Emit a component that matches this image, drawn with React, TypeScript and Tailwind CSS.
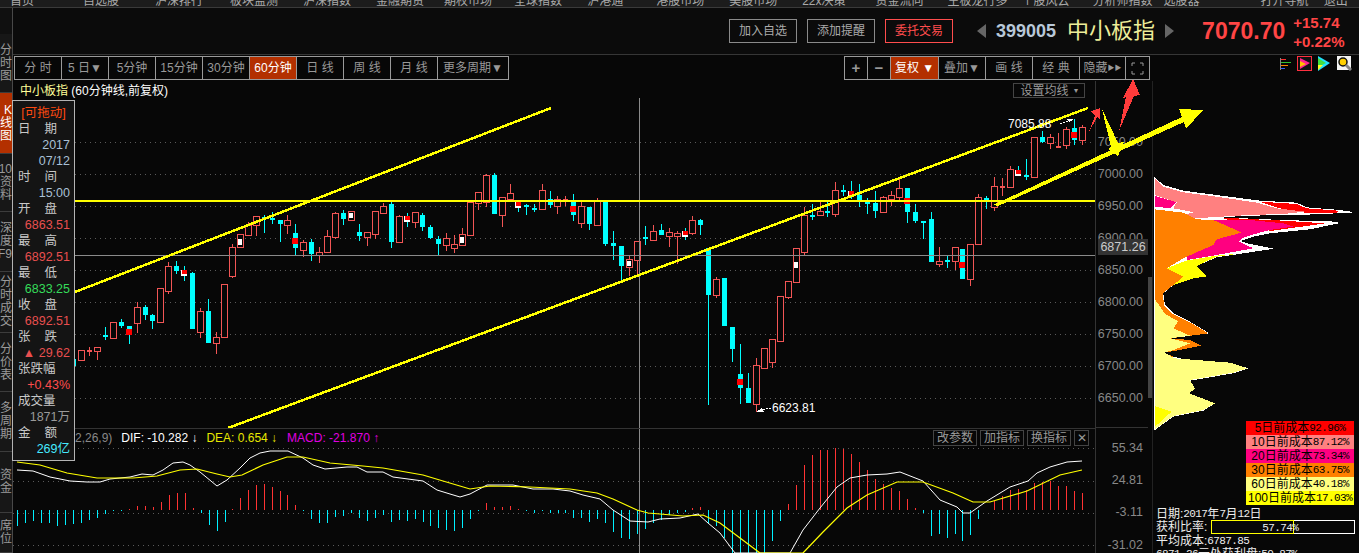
import React from "react";

type Candle = [number, number, number, number, number, "r" | "c" | "m", number?, number?];

const RED = "#f25555";
const CYAN = "#00ffff";

// x, wick top, body top, body bottom, wick bottom, kind, inner y1, inner y2
const candles: Candle[] = [
  [73, 359, 359, 366, 366, "c"], [81, 350, 350, 360, 360, "r"], [89, 347, 350, 350, 356, "r"], [97, 347, 347, 351, 360, "r"],
  [105, 327, 335, 335, 340, "c"], [113, 322, 322, 338, 338, "r"], [121, 319, 322, 326, 328, "c"], [129, 326, 326, 335, 344, "c", 329, 335],
  [137, 302, 307, 323, 333, "r"], [145, 305, 307, 315, 320, "c"], [152, 314, 315, 321, 329, "c"], [160, 288, 288, 322, 322, "r"],
  [168, 262, 266, 291, 294, "r"], [176, 261, 266, 271, 274, "c"], [184, 266, 270, 276, 281, "m"], [192, 272, 273, 329, 329, "c"],
  [200, 308, 311, 332, 338, "r"], [208, 299, 311, 343, 343, "c"], [216, 332, 337, 343, 354, "r"], [224, 284, 284, 337, 338, "r"],
  [232, 244, 247, 276, 278, "r"], [240, 234, 234, 247, 247, "r", 239, 245], [248, 222, 225, 235, 236, "r"], [256, 216, 216, 225, 236, "r"],
  [264, 215, 217, 217, 233, "c"], [272, 212, 218, 220, 224, "c"], [280, 220, 220, 224, 242, "c"], [287, 215, 220, 225, 234, "r"],
  [295, 224, 233, 248, 255, "c", 238, 244], [303, 240, 242, 250, 257, "r"], [311, 239, 242, 254, 261, "c"], [319, 247, 252, 255, 263, "r"],
  [327, 230, 236, 252, 252, "r"], [335, 212, 213, 237, 239, "r"], [343, 210, 213, 219, 225, "c"], [351, 211, 211, 220, 221, "r", 213, 218],
  [359, 224, 232, 236, 241, "c"], [367, 232, 232, 237, 246, "r"], [375, 211, 211, 234, 239, "r"], [383, 203, 206, 213, 214, "r"],
  [391, 202, 204, 242, 248, "c"], [399, 215, 216, 242, 242, "r"], [407, 213, 216, 222, 227, "m"], [415, 212, 212, 222, 228, "r"],
  [422, 213, 215, 227, 231, "c"], [430, 225, 227, 238, 239, "c"], [438, 236, 239, 244, 255, "c"], [446, 233, 238, 245, 251, "r"],
  [454, 235, 244, 248, 253, "r"], [462, 228, 234, 245, 245, "r", 237, 243], [470, 202, 202, 235, 235, "r"], [478, 192, 192, 203, 210, "r"],
  [486, 174, 175, 202, 207, "r"], [494, 173, 175, 214, 214, "c"], [502, 197, 197, 215, 227, "r"], [510, 184, 193, 199, 199, "r"],
  [518, 202, 202, 208, 212, "m"], [526, 204, 205, 207, 215, "c"], [534, 204, 208, 208, 212, "c"], [542, 184, 190, 209, 209, "r"],
  [550, 191, 199, 205, 208, "c"], [557, 196, 199, 206, 214, "r"], [565, 196, 199, 199, 206, "r"], [573, 194, 202, 215, 221, "c", 206, 212],
  [581, 202, 206, 223, 228, "r"], [589, 207, 207, 224, 230, "c"], [597, 198, 200, 225, 226, "r"], [605, 201, 201, 244, 246, "c"],
  [613, 231, 243, 246, 260, "c"], [621, 246, 246, 266, 281, "c"], [629, 256, 259, 267, 276, "r", 261, 266], [637, 241, 241, 260, 275, "r"],
  [645, 226, 237, 239, 245, "c"], [653, 225, 231, 240, 240, "r"], [661, 224, 230, 235, 235, "c"], [669, 228, 232, 236, 247, "r"],
  [677, 231, 233, 236, 264, "r"], [685, 228, 231, 237, 240, "m"], [692, 216, 220, 233, 235, "r"], [700, 219, 220, 225, 235, "c"],
  [708, 248, 248, 295, 405, "c"], [716, 277, 279, 295, 298, "r"], [724, 278, 278, 326, 326, "c"], [732, 327, 327, 349, 362, "c"],
  [740, 344, 374, 388, 404, "c", 379, 385], [748, 373, 388, 403, 403, "c"], [756, 358, 365, 404, 412, "r"], [764, 348, 348, 368, 368, "r"],
  [772, 339, 339, 362, 368, "r"], [780, 296, 296, 341, 341, "r"], [788, 281, 281, 297, 299, "r"], [796, 248, 248, 282, 282, "r", 262, 268],
  [804, 207, 215, 252, 256, "r"], [812, 204, 215, 215, 220, "c"], [820, 202, 211, 215, 215, "r"], [827, 202, 211, 213, 217, "c"],
  [835, 182, 190, 214, 217, "r"], [843, 185, 190, 190, 196, "c"], [851, 181, 191, 197, 199, "m"], [859, 184, 195, 200, 207, "c"],
  [867, 198, 202, 204, 214, "c"], [875, 191, 203, 211, 218, "c"], [883, 196, 197, 212, 212, "r"], [891, 191, 195, 199, 206, "r"],
  [899, 179, 188, 197, 201, "r"], [907, 188, 188, 212, 223, "c", 198, 204], [915, 204, 212, 221, 223, "c"], [923, 221, 221, 223, 239, "c"],
  [931, 212, 219, 262, 262, "c"], [939, 247, 261, 264, 267, "r"], [947, 256, 260, 260, 268, "c"], [955, 247, 247, 261, 270, "r"],
  [962, 249, 249, 279, 279, "c", 262, 268], [970, 244, 244, 279, 286, "r"], [978, 194, 197, 244, 244, "r"], [986, 196, 198, 198, 209, "c"],
  [994, 177, 186, 207, 211, "r"], [1002, 178, 186, 186, 196, "r"], [1010, 166, 169, 187, 187, "r"], [1018, 166, 170, 176, 176, "m"],
  [1026, 159, 175, 175, 180, "c"], [1034, 137, 137, 177, 177, "r"], [1042, 131, 137, 142, 143, "c"], [1050, 134, 137, 143, 149, "r"],
  [1058, 133, 146, 146, 147, "r"], [1066, 127, 129, 145, 149, "r"], [1074, 119, 128, 140, 145, "c", 132, 138], [1082, 125, 127, 140, 145, "r"],
];

// x, end of bar measured from the zero line
const bars: [number, number][] = [
  [17, 526], [25, 523], [33, 521], [41, 523], [49, 523], [57, 526], [65, 525], [73, 524], [81, 523], [89, 520], [97, 518], [105, 514], [113, 511],
  [121, 511], [129, 509], [137, 506], [145, 506], [153, 507], [161, 502], [169, 495], [177, 493], [185, 493], [193, 508], [201, 513], [209, 525],
  [217, 531], [225, 522], [232, 509], [240, 498], [248, 490], [256, 485], [264, 484], [272, 487], [280, 491], [287, 495], [295, 505], [303, 511],
  [311, 519], [319, 523], [327, 523], [335, 517], [343, 516], [351, 513], [359, 518], [367, 521], [375, 518], [383, 515], [391, 522], [399, 520],
  [407, 521], [415, 519], [423, 522], [430, 526], [438, 528], [446, 530], [454, 531], [462, 528], [470, 519], [478, 511], [486, 503], [494, 507],
  [502, 507], [510, 506], [518, 509], [526, 511], [534, 513], [542, 511], [550, 513], [558, 513], [565, 513], [573, 518], [581, 518], [589, 522],
  [597, 519], [605, 523], [613, 532], [621, 538], [629, 539], [637, 534], [645, 529], [653, 523], [661, 520], [669, 515], [677, 513], [685, 512],
  [692, 508], [700, 507], [708, 523], [716, 526], [724, 538], [732, 553], [740, 553], [748, 553], [756, 553], [764, 553], [772, 541], [780, 521],
  [788, 504], [796, 485], [804, 465], [812, 455], [820, 450], [827, 450], [835, 448], [843, 449], [851, 454], [859, 462], [867, 470], [875, 479],
  [883, 484], [891, 488], [899, 491], [907, 499], [915, 508], [923, 513], [931, 536], [939, 534], [947, 538], [955, 534], [962, 541], [970, 535],
  [978, 519], [994, 501], [1002, 496], [1010, 490], [1018, 489], [1026, 490], [1034, 483], [1042, 482], [1050, 481], [1058, 486], [1066, 486], [1074, 491], [1082, 493],
];

const dif = "17,470 33,471 50,477 70,481 87,482 100,482 110,479 130,477 142,474 153,475 163,470 173,463 183,462 190,465 200,472 217,486 227,480 240,468 250,458 260,453 270,451 288,451 303,458 313,465 325,469 347,467 357,467 367,472 383,472 393,477 423,481 437,490 450,494 460,497 470,494 487,485 513,485 533,489 553,489 570,491 583,495 600,499 613,510 630,521 648,522 660,519 680,518 698,514 708,523 720,533 735,553 790,553 803,530 820,508 837,487 850,478 867,475 887,474 900,472 923,481 940,500 957,507 963,513 970,513 987,501 1010,487 1028,481 1037,473 1050,467 1067,462 1082,461";
const dea = "17,462 40,465 67,473 97,478 133,478 157,476 180,470 197,469 217,474 230,477 242,475 263,465 287,457 303,457 330,463 363,466 383,468 423,475 443,481 470,489 490,486 530,487 570,489 597,493 613,499 637,510 648,513 660,514 683,516 703,515 720,523 740,538 760,553 803,553 823,532 847,508 867,495 897,482 923,482 953,493 973,502 990,502 1027,491 1060,475 1082,470";

const navItems: [string, string][] = [
  ["首页", "ml-[10px]"], ["自选股", "ml-[49px]"], ["沪深排行", "ml-[36px]"], ["板块监测", "ml-[27px]"], ["沪深指数", "ml-[25px]"], ["金融期货", "ml-[25px]"],
  ["期权市场", "ml-[20px]"], ["全球指数", "ml-[22px]"], ["沪港通", "ml-[25px]"], ["港股市场", "ml-[33px]"], ["美股市场", "ml-[25px]"], ["22x决策", "ml-[25px]"],
  ["资金流向", "ml-[30px]"], ["主板龙行多", "ml-[24px]"], ["个股风云", "ml-[14px]"], ["分析师指数", "ml-[23px]"], ["选股器", "ml-[11px]"], ["打开导航", "ml-[61px]"], ["退出", "ml-[15px]"],
];

const sideTabs: [string[], string, boolean][] = [
  [["分", "时", "图"], "h-[59px]", false],
  [["K", "线", "图"], "h-[61px]", true],
  [["F10", "资", "料"], "h-[58px]", false],
  [["深", "度", "F9"], "h-[60px]", false],
  [["分", "时", "成", "交"], "h-[61px]", false],
  [["分", "价", "表"], "h-[59px]", false],
  [["多", "周", "期"], "h-[60px]", false],
  [["资", "金"], "h-[61px]", false],
  [["席", "位"], "h-[40px]", false],
];

const periodTabs: [string, string, boolean?][] = [
  ["分 时", "w-[47px]"], ["5 日▼", "w-[47px]"], ["5分钟", "w-[47px]"], ["15分钟", "w-[47px]"], ["30分钟", "w-[47px]"], ["60分钟", "w-[47px]", true],
  ["日 线", "w-[47px]"], ["周 线", "w-[47px]"], ["月 线", "w-[47px]"], ["更多周期▼", "w-[70px]"],
];

const toolTabs: [React.ReactNode, string, boolean?][] = [
  [<span className="text-[15px] font-bold">+</span>, "w-[23px]"],
  [<span className="text-[15px] font-bold">−</span>, "w-[23px]"],
  ["复权 ▼", "w-[48px]", true],
  ["叠加▼", "w-[47px]"],
  ["画 线", "w-[47px]"],
  ["经 典", "w-[47px]"],
  [<>隐藏<span className="text-[7px]">▶▶</span></>, "w-[46px]"],
];

const infoRows: [string, string][] = [
  ["日|期", "label"], ["2017", "text-[#a9c0d6]"], ["07/12", "text-[#a9c0d6]"], ["时|间", "label"], ["15:00", "text-[#a9c0d6]"], ["开|盘", "label"],
  ["6863.51", "text-[#e84f4f]"], ["最|高", "label"], ["6892.51", "text-[#e84f4f]"], ["最|低", "label"], ["6833.25", "text-[#35dc5a]"], ["收|盘", "label"],
  ["6892.51", "text-[#e84f4f]"], ["张|跌", "label"], ["▲ 29.62", "text-[#e84f4f]"], ["张跌幅", "label"], ["+0.43%", "text-[#ff4d4d]"], ["成交量", "label"],
  ["1871万", "text-[#9a9a9a]"], ["金|额", "label"], ["269亿", "text-[#46eaff]"],
];

const legend: [string, string, string][] = [
  ["5日前成本", "92.96%", "bg-[#ff0000]"],
  ["10日前成本", "87.12%", "bg-[#ff8080]"],
  ["20日前成本", "73.34%", "bg-[#ff0080]"],
  ["30日前成本", "63.75%", "bg-[#ff8000]"],
  ["60日前成本", "40.18%", "bg-[#ffff80]"],
  ["100日前成本", "17.03%", "bg-[#ffff00]"],
];

function Num({ children }: { children: React.ReactNode }) {
  return <span className="font-['Liberation_Mono',monospace] text-[11px] tracking-[-0.6px]">{children}</span>;
}

function CandleMark({ c }: { c: Candle }) {
  const [x, wt, t, b, wb, kind, i1, i2] = c;
  const color = kind === "r" ? RED : CYAN;
  const flat = b - t < 1;
  return (
    <g>
      <rect x={x} y={wt} width={1} height={Math.max(wb - wt, 1)} fill={color} />
      {flat && <rect x={x - 2} y={t} width={5} height={2} fill={color} />}
      {!flat && kind === "c" && <rect x={x - 2} y={t} width={5} height={b - t} fill={CYAN} />}
      {!flat && kind === "r" && <rect x={x - 2.5} y={t + 0.5} width={6} height={b - t} fill="#070707" stroke={RED} />}
      {!flat && kind === "m" && <rect x={x - 3} y={t} width={6} height={b - t} fill="#ffffff" />}
      {kind === "m" && <rect x={x - 2} y={t} width={5} height={Math.round((b - t) * 0.6)} fill="#ff0000" />}
      {i1 !== undefined && i2 !== undefined && (
        kind === "c"
          ? <rect x={x - 3} y={i1} width={6} height={i2 - i1} fill="#ff0000" />
          : <rect x={x - 2} y={i1} width={4} height={i2 - i1} fill="#ffffff" />
      )}
    </g>
  );
}

function Grid({ lines, from }: { lines: number[]; from: number }) {
  return (
    <>
      {lines.map((y) => (
        <line key={y} x1={from} x2={1094} y1={y + 0.5} y2={y + 0.5} stroke="#5a5a5a" strokeDasharray="1 4" />
      ))}
    </>
  );
}

function MainChart() {
  return (
    <svg viewBox="13 81 1082 347" className="block h-[347px] w-[1082px]" shapeRendering="crispEdges">
      <Grid lines={[142, 174, 206, 238, 270, 302, 334, 366, 398]} from={75} />
      {candles.map((c) => <CandleMark key={c[0]} c={c} />)}
      <rect x={13} y={255} width={1082} height={1} fill="#8a8a8a" />
      <rect x={639} y={98} width={1} height={330} fill="#8a8a8a" />
      <rect x={13} y={200} width={1082} height={2} fill="#ffff00" />
      <line x1={75} y1={292} x2={551} y2={108} stroke="#ffff00" strokeWidth={2.5} />
      <line x1={228} y1={428} x2={1088} y2={108} stroke="#ffff00" strokeWidth={2.5} />
      <text x={772} y={412} fontSize={12} fill="#fff" shapeRendering="auto">6623.81</text>
      <polyline points="771,408 762,410" stroke="#fff" fill="none" strokeDasharray="2 1" />
      <polygon points="756,412 762,408 764,412" fill="#fff" />
      <text x={1008} y={128} fontSize={12} fill="#fff" shapeRendering="auto">7085.88</text>
      <polyline points="1060,124 1072,120" stroke="#fff" fill="none" strokeDasharray="2 1" />
      <polygon points="1074,119 1067,119 1069,122" fill="#fff" />
    </svg>
  );
}

function MacdChart() {
  return (
    <svg viewBox="13 429 1082 124" className="block h-[124px] w-[1082px]" shapeRendering="crispEdges">
      <Grid lines={[448, 481, 513, 545]} from={13} />
      {bars.map(([x, y]) => (
        y < 510
          ? <rect key={x} x={x} y={y} width={1} height={510 - y} fill="#ff3333" />
          : <rect key={x} x={x} y={510} width={1} height={y - 510} fill="#00f0ff" />
      ))}
      <rect x={639} y={429} width={1} height={124} fill="#8a8a8a" />
      <polyline points={dif} fill="none" stroke="#ffffff" strokeWidth={1} shapeRendering="auto" />
      <polyline points={dea} fill="none" stroke="#ffff00" strokeWidth={1.2} shapeRendering="auto" />
    </svg>
  );
}

function CostProfile() {
  return (
    <svg viewBox="0 0 627 780" className="block h-[260px] w-[209px]" shapeRendering="crispEdges">
      <polygon fill="#ffffff" points="12,20 40,45 100,62 200,75 330,92 440,98 470,112 570,120 615,127 500,133 420,135 300,137 210,142 400,150 560,155 565,160 480,178 360,190 310,200 270,213 300,222 372,236 280,250 200,262 140,288 170,319 130,325 70,345 40,370 45,405 70,430 120,455 178,490 100,500 60,505 120,510 155,527 90,540 42,548 70,560 110,570 240,578 295,595 250,610 120,632 135,655 118,670 195,700 160,722 70,740 12,782" />
      <polygon fill="#ff0000" points="330,95 440,102 470,115 565,122 560,130 480,130 420,122 380,112" />
      <polygon fill="#ff0000" points="215,143 400,152 525,160 440,172 360,183 330,172 240,152" />
      <polygon fill="#ff8080" points="15,25 40,50 100,67 200,80 320,98 380,115 465,125 400,132 300,135 180,142 130,146 85,138 130,127 100,120 70,115 80,97 15,75" />
      <polygon fill="#ff0080" points="15,78 40,85 80,97 62,113 15,112" />
      <polygon fill="#ff0080" points="190,150 300,150 400,160 430,170 360,180 310,193 275,205 268,215 310,235 200,255 110,270 110,258 190,225 200,208 275,188 225,165" />
      <polygon fill="#ff8000" points="15,118 100,128 140,148 190,150 225,165 275,188 200,208 190,225 105,262 50,295 100,320 70,345 38,370 43,408 68,432 120,457 175,490 100,500 60,505 120,510 155,527 90,540 42,548 70,560 15,565" />
      <polygon fill="#ffff00" points="108,272 200,257 275,250 200,260 140,288 170,319 130,325 70,345 100,320 50,295" />
      <polygon fill="#ffff80" points="15,388 45,432 85,454 70,475 120,497 60,505 120,520 70,540 42,548 75,565 240,578 293,595 250,608 120,630 135,655 118,670 195,700 160,720 70,738 15,778" />
      <polygon fill="#ffff00" points="15,708 65,725 15,770" />
    </svg>
  );
}

function ToolIcons() {
  return (
    <div className="ml-auto mr-[7px] flex items-center gap-[5px]">
      <svg viewBox="0 0 11 14" className="mr-[1px] h-[14px] w-[11px]">
        <rect x={0} y={1} width={1} height={12} fill="#888" />
        <rect x={1} y={2} width={5} height={1} fill="#ff3030" />
        <rect x={1} y={5} width={10} height={1} fill="#30c030" />
        <rect x={1} y={8} width={7} height={1} fill="#ff8000" />
        <rect x={1} y={11} width={4} height={1} fill="#3060ff" />
      </svg>
      <svg viewBox="0 0 15 15" className="h-[15px] w-[15px]">
        <rect x={0.5} y={0.5} width={14} height={14} fill="#111" stroke="#ff3040" />
        <polygon points="3,2 13,7 3,13" fill="#ff2090" />
        <polygon points="3,5 9,8 3,11" fill="#ffc000" />
      </svg>
      <svg viewBox="0 0 12 15" className="ml-[1px] h-[15px] w-[12px]">
        <polygon points="0,0 12,7 0,15" fill="#20e0ff" />
        <polygon points="0,2 8,7 0,11" fill="#40e040" />
        <polygon points="0,9 5,9 0,14" fill="#ffff20" />
      </svg>
      <svg viewBox="0 0 15 15" className="ml-[2px] h-[15px] w-[15px]">
        <rect x={0} y={0} width={14} height={14} fill="#f4f4f4" />
        <circle cx={6} cy={6} r={4} fill="#ffd000" stroke="#111" strokeWidth={1.5} />
        <line x1={9} y1={9} x2={14} y2={14} stroke="#888" strokeWidth={3} />
      </svg>
    </div>
  );
}

function InfoPanel() {
  return (
    <div className="absolute left-[12px] top-[100px] h-[361px] w-[63px] border border-[#b4b4b4] bg-[#141414] pt-[4px] text-[12.5px] leading-[16px]">
      <div className="text-center text-[#ff4a10]">[可拖动]</div>
      {infoRows.map(([text, tone], i) => (
        tone === "label" ? (
          text.includes("|") ? (
            <div key={i} className="flex justify-between pl-[5px] pr-[17px] text-[#c8c8c8]">
              <span>{text.split("|")[0]}</span>
              <span>{text.split("|")[1]}</span>
            </div>
          ) : (
            <div key={i} className="pl-[5px] text-[#c8c8c8]">{text}</div>
          )
        ) : (
          <div key={i} className={`pr-[4px] text-right ${tone}`}>{text}</div>
        )
      ))}
    </div>
  );
}

export default function App() {
  return (
    <div className="relative flex h-[553px] w-[1359px] flex-col overflow-hidden bg-[#070707] font-['Liberation_Sans','Noto_Sans_CJK_SC',sans-serif] text-[12px] text-[#999]">
      <nav className="h-[8px] shrink-0 overflow-hidden border-b border-[#3a3a3a] bg-[#1c1c1c]">
        <div className="-mt-[5px] flex whitespace-nowrap leading-[12px] text-[#aaa]">
          {navItems.map(([label, gap]) => <span key={label} className={gap}>{label}</span>)}
        </div>
      </nav>

      <div className="flex min-h-0 flex-1">
        <aside className="w-[13px] shrink-0 overflow-hidden border-r border-[#484848] bg-[#101010]">
          <div className="h-[26px]" />
          {sideTabs.map(([chars, height, active], i) => (
            <div key={i} className={`${height} flex flex-col items-end justify-center overflow-hidden border-b border-[#3c3c3c] leading-[13px] ${active ? "bg-[#b33000] text-white" : "bg-[#171717] text-[#9a9a9a]"}`}>
              {chars.map((ch) => <span key={ch} className="whitespace-nowrap">{ch}</span>)}
            </div>
          ))}
        </aside>

        <div className="flex min-w-0 flex-1 flex-col">
          <header className="flex h-[47px] shrink-0 items-center border-b border-[#363636] bg-[#0b0b0b]">
            <button className="ml-[716px] h-[24px] w-[68px] border border-[#8a8a8a] text-[#aaa]">加入自选</button>
            <button className="ml-[10px] h-[24px] w-[68px] border border-[#8a8a8a] text-[#aaa]">添加提醒</button>
            <button className="ml-[10px] h-[24px] w-[68px] border border-[#ff4d4d] text-[#ff4d4d]">委托交易</button>
            <span className="ml-[24px] h-0 w-0 border-y-[7px] border-r-[9px] border-y-transparent border-r-[#666]" />
            <span className="ml-[10px] text-[18px] font-bold text-[#b8c8d8]">399005</span>
            <span className="ml-[11px] text-[22px] leading-[26px] text-[#eeee99]">中小板指</span>
            <span className="ml-[10px] h-0 w-0 border-y-[7px] border-l-[9px] border-y-transparent border-l-[#666]" />
            <span className="ml-[28px] text-[23px] font-bold text-[#ff4545]">7070.70</span>
            <div className="ml-[8px] mt-[1px] flex flex-col gap-[2px] text-[15px] font-bold leading-[17px] text-[#ff4545]">
              <span>+15.74</span>
              <span>+0.22%</span>
            </div>
          </header>

          <div className="flex h-[26px] shrink-0 items-start pt-[1px]">
            <div className="ml-[1px] flex h-[24px] border border-[#9a9a9a]">
              {periodTabs.map(([label, width, active]) => (
                <span key={label} className={`${width} flex items-center justify-center whitespace-pre border-r border-[#9a9a9a] last:border-r-0 ${active ? "bg-[#b33000] text-white" : ""}`}>{label}</span>
              ))}
            </div>
            <div className="ml-[335px] flex h-[24px] border border-[#9a9a9a]">
              {toolTabs.map(([label, width, active], i) => (
                <span key={i} className={`${width} flex items-center justify-center whitespace-pre border-r border-[#9a9a9a] ${active ? "bg-[#b33000] text-white" : ""}`}>{label}</span>
              ))}
              <span className="flex w-[23px] items-center justify-center">
                <svg viewBox="0 0 13 13" className="h-[13px] w-[13px]" fill="none" stroke="#999">
                  <path d="M1 4V1h3M9 1h3v3M12 9v3H9M4 12H1V9" />
                </svg>
              </span>
            </div>
            <ToolIcons />
          </div>

          <div className="flex min-h-0 flex-1">
            <div className="w-[1082px] shrink-0">
              <div className="relative border-b border-[#333]">
                <MainChart />
                <div className="absolute left-[7px] top-[3px] leading-[14px] text-white">
                  <span className="text-[#ffff99]">中小板指</span> (60分钟线,前复权)
                </div>
                <div className="absolute right-[10px] top-[2px] flex h-[15px] w-[72px] items-center justify-center gap-[5px] border border-[#444] text-[#999]">
                  设置均线<span className="text-[8px]">▾</span>
                </div>
              </div>
              <div className="relative">
                <MacdChart />
                <div className="absolute left-[62px] top-[1px] flex whitespace-pre leading-[16px]">
                  <span className="text-[#888]">2,26,9)</span>
                  <span className="ml-[9px] text-white">DIF: -10.282 ↓</span>
                  <span className="ml-[9px] text-[#e8e800]">DEA: 0.654 ↓</span>
                  <span className="ml-[10px] text-[#e000e0]">MACD: -21.870 ↑</span>
                </div>
                <div className="absolute right-[6px] top-[1px] flex gap-[3px] leading-[14px]">
                  <span className="border border-[#444] px-[3px]">改参数</span>
                  <span className="border border-[#444] px-[3px]">加指标</span>
                  <span className="border border-[#444] px-[3px]">换指标</span>
                  <span className="flex w-[15px] items-center justify-center border border-[#444]">✕</span>
                </div>
              </div>
            </div>

            <div className="relative w-[53px] shrink-0 border-l border-[#333] text-right text-[12.5px] text-[#888]">
              <div className="h-[347px] border-b border-[#333] pr-[5px] pt-[45px]">
                {["7050.00", "7000.00", "6950.00", "6900.00", "6850.00", "6800.00", "6750.00", "6700.00", "6650.00"].map((v) => (
                  <div key={v} className="flex h-[32px] items-center justify-end">{v}</div>
                ))}
              </div>
              <div className="pr-[5px] pt-[4px]">
                {["55.34", "24.81", "-3.11", "-31.02"].map((v) => (
                  <div key={v} className="flex h-[32.3px] items-center justify-end">{v}</div>
                ))}
              </div>
              <div className="absolute left-[2px] top-[158px] flex h-[16px] w-[50px] items-center justify-center bg-[#333] text-[#ccc]">6871.26</div>
            </div>

            <div className="flex w-[5px] shrink-0 flex-col border-r border-[#222]">
              <div className="mt-[196px] h-[121px] bg-[#444]" />
            </div>

            <div className="flex min-w-0 flex-1 flex-col">
              <div className="-ml-[3px] mt-[89px]"><CostProfile /></div>
              <div className="relative -mt-[9px] ml-[93px] w-[108px] leading-[14px] text-black">
                {legend.map(([label, pct, bg]) => (
                  <div key={label} className={`${bg} flex h-[14px] items-center justify-center whitespace-nowrap`}>
                    {label}<Num>{pct}</Num>
                  </div>
                ))}
              </div>
              <div className="ml-[3px] mt-[2px] whitespace-nowrap text-[#eee]">
                <div className="flex h-[13.5px] items-center">日期:<Num>2017</Num>年<Num>7</Num>月<Num>12</Num>日</div>
                <div className="flex h-[13.5px] items-center">
                  获利比率:
                  <div className="relative ml-[4px] flex h-[14px] w-[144px] border border-white">
                    <div className="-m-px h-[14px] w-[83px] border border-[#ffff00]" />
                    <span className="absolute left-[50px] top-0 leading-[12px]"><Num>57.74%</Num></span>
                  </div>
                </div>
                <div className="flex h-[13.5px] items-center">平均成本:<Num>6787.85</Num></div>
                <div className="flex h-[13.5px] items-center"><Num>6871.26</Num>元处获利盘:<Num>50.87%</Num></div>
              </div>
            </div>
          </div>
        </div>
      </div>

      <svg viewBox="0 0 1359 553" className="pointer-events-none absolute inset-0 h-[553px] w-[1359px]" shapeRendering="crispEdges">
        <polygon fill="#ffff00" points="993,205 1182,117 1179,109 1203,110 1186,129 1184,122 998,206" />
        <polygon fill="#ffff00" points="1102,109 1118,143 1124,142 1118,156 1108,149 1111,147" />
        <polygon fill="#ff3b3b" points="1088,134 1095,116 1091,111 1100,108 1100,119 1097,117" />
        <polygon fill="#ff3b3b" points="1119,131 1126,97 1123,98 1133,79 1140,95 1134,96" />
      </svg>

      <InfoPanel />
    </div>
  );
}
